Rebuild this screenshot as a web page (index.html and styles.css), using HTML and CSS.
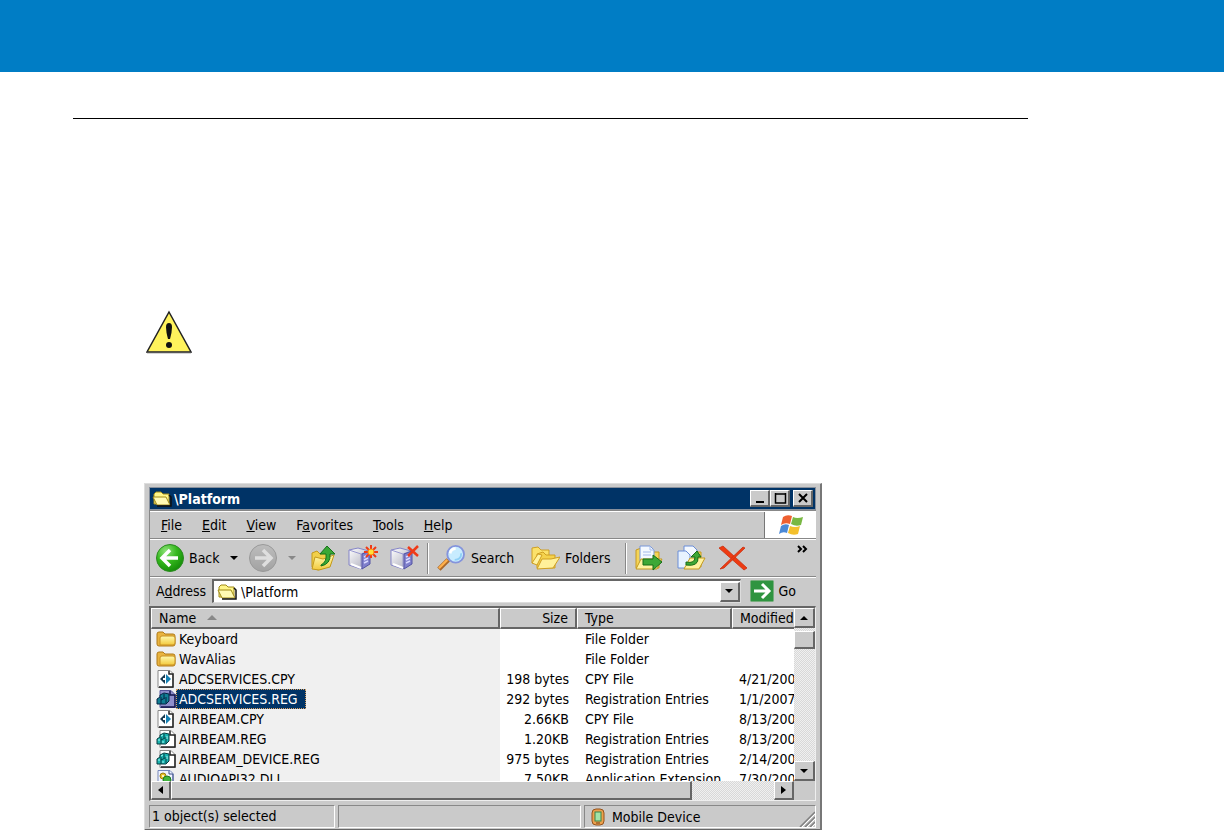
FILE: index.html
```html
<!DOCTYPE html>
<html lang="en">
<head>
<meta charset="utf-8">
<title>\Platform</title>
<link rel="stylesheet" href="styles.css">
</head>
<body>
<svg class="defs" aria-hidden="true">
  <defs>
    <linearGradient id="gold" x1="0" y1="0" x2="0" y2="1"><stop offset="0" stop-color="#fffbb0"/><stop offset="1" stop-color="#f3c93c"/></linearGradient>
    <radialGradient id="green" cx="35%" cy="25%" r="80%"><stop offset="0" stop-color="#8fe37a"/><stop offset=".5" stop-color="#35b81d"/><stop offset="1" stop-color="#138a08"/></radialGradient>
    <linearGradient id="gray" x1="0" y1="0" x2="0" y2="1"><stop offset="0" stop-color="#bdbdbd"/><stop offset="1" stop-color="#a2a2a2"/></linearGradient>
    <linearGradient id="pcface" x1="0" y1="0" x2="1" y2="1"><stop offset="0" stop-color="#ffffff"/><stop offset="1" stop-color="#a6a6b6"/></linearGradient>
    <symbol id="open-folder" viewBox="0 0 20 16">
      <path d="M2 13V3l2-2h5l2 2h6v10z" fill="#fff68a" stroke="#a08a18"/>
      <path d="M5 14L1 6h13l4 8z" fill="#fffab4" stroke="#a08a18"/>
      <path d="M17 4l2 2v9H5" fill="none" stroke="#111" stroke-width="1.5"/>
    </symbol>
    <symbol id="folder" viewBox="0 0 20 16">
      <path d="M1 13V3q0-2 2-2h4l2 2h8q2 0 2 2v8q0 2-2 2H3q-2 0-2-2z" fill="#e9b440" stroke="#b07a18"/>
      <path d="M4 14V7q0-2 2-2h11q2 0 2 2v5q0 2-2 2z" fill="url(#gold)" stroke="#c89024"/>
    </symbol>
    <symbol id="cpy" viewBox="0 0 20 18">
      <path d="M2 .5h12l3 3v14H2z" fill="#fff" stroke="#888"/>
      <path d="M13 1v3h4v13H3" fill="none" stroke="#222" stroke-width="1.5"/>
      <path d="M9 4v10L4 9z" fill="#173a50"/><path d="M10 4v10l5-5z" fill="#1682b4"/><path d="M7 8h2v2H7z" fill="#fff"/>
    </symbol>
    <symbol id="reg" viewBox="0 0 20 18">
      <path d="M4 .5h11l4 4v13H4z" fill="#fff" stroke="#888"/>
      <path d="M14 1v4h5v12H5" fill="none" stroke="#222" stroke-width="1.500"/>
      <path d="M1 9l3-2V5l4-2 5 1v7l-3 3H1z" fill="#18b4b0" stroke="#063c40"/>
      <path d="M5 7v7M5 10l4-2M8 4v4M10 7v6" fill="none" stroke="#063c40"/><path d="M5 6l2-1M2 10h2M7 11v2M11 6v3" stroke="#9ffaf4"/>
    </symbol>
    <symbol id="reg-selected" viewBox="0 0 20 18">
      <path d="M4 .5h11l4 4v13H4z" fill="#8f8fcc" stroke="#55559a"/>
      <path d="M14 1v4h5v12H5" fill="none" stroke="#15154c" stroke-width="1.500"/>
      <path d="M1 9l3-2V5l4-2 5 1v7l-3 3H1z" fill="#117f94" stroke="#052444"/>
      <path d="M5 7v7M5 10l4-2M8 4v4M10 7v6" fill="none" stroke="#052444"/>
    </symbol>
    <symbol id="dll" viewBox="0 0 20 18">
      <path d="M2 .5h12l3 3v14H2z" fill="#eef3ff" stroke="#7788bb"/><path d="M13 1v3h4v13" fill="none" stroke="#3d4c88"/>
      <circle cx="7" cy="6" r="3" fill="#e6c22a" stroke="#9c7c10"/><circle cx="11" cy="10" r="4" fill="#41b53c" stroke="#1d7a20"/><circle cx="7" cy="6" r="1" fill="#fff"/>
    </symbol>
    <symbol id="computer" viewBox="0 0 30 26">
      <path d="M1 5l9-2 11 3v13l-8 5-12-4z" fill="url(#pcface)" stroke="#8585c8"/>
      <path d="M1 5l12 4 8-3M13 9v15" fill="none" stroke="#9898d0"/>
      <path d="M14 9l8-3v13l-8 5z" fill="#8080cc" stroke="#5454a4"/>
      <path d="M16 12l4-2M16 15l4-2M16 18l4-2" stroke="#d8d8ff" stroke-width="1.500"/>
      <path d="M3 19l10 4" stroke="#fff" stroke-width="2"/>
    </symbol>
  </defs>
</svg>

<header class="banner"></header>
<main class="page">
  <hr class="rule">
  <svg class="caution" viewBox="0 0 46 44" role="img" aria-label="Caution">
    <path d="M23 2L45 42H1z" fill="#fff35c" stroke="#222" stroke-width="1.500"/>
    <path d="M1 42.500h44" stroke="#555" stroke-width="1.500"/>
    <path d="M20 17q0-4 3-4t3 4q0 5-2 12h-2q-2-7-2-12z" fill="#111"/><circle cx="23" cy="35" r="3" fill="#111"/>
  </svg>

  <section class="window">
    <div class="titlebar">
      <svg class="icon20"><use href="#open-folder"/></svg>
      <h1 class="title">\Platform</h1>
      <button class="bevel caption" aria-label="Minimize"><svg viewBox="0 0 16 12"><path d="M4 10h8" stroke="#000" stroke-width="2"/></svg></button>
      <button class="bevel caption" aria-label="Maximize"><svg viewBox="0 0 16 12"><path d="M3 2h11M3.500 1v10h10V1" fill="none" stroke="#000" stroke-width="1.500"/></svg></button>
      <button class="bevel caption close" aria-label="Close"><svg viewBox="0 0 16 12"><path d="M4 2l8 8M12 2l-8 8" stroke="#000" stroke-width="2"/></svg></button>
    </div>

    <div class="bars">
      <nav class="menubar">
        <button><u>F</u>ile</button><button><u>E</u>dit</button><button><u>V</u>iew</button><button>F<u>a</u>vorites</button><button><u>T</u>ools</button><button><u>H</u>elp</button>
        <div class="brand">
          <svg viewBox="0 0 26 22">
            <path d="M5 3q4-3 9-1l-2 8q-5-2-9 1z" fill="#ee6030"/><path d="M15 3q4 2 10 0l-2 8q-5 2-10-1z" fill="#79b843"/>
            <path d="M3 12q4-3 8-1l-2 8q-4-2-8 1z" fill="#4a88d6"/><path d="M12 12q5 2 10 0l-2 8q-5 2-10-1z" fill="#f4c02c"/>
          </svg>
        </div>
      </nav>

      <div class="toolbar">
        <button class="tool back">
          <svg class="round" viewBox="0 0 30 28"><circle cx="15" cy="14" r="13.500" fill="url(#green)" stroke="#2c8c20"/><path d="M15 6l-8 8 8 8M8 14h15" fill="none" stroke="#fff" stroke-width="3.500"/></svg>
          <span>Back</span>
        </button>
        <button class="tool drop" aria-label="Back history"><svg viewBox="0 0 8 4"><path d="M0 0h8L4 4z" fill="#000"/></svg></button>
        <button class="tool" aria-label="Forward"><svg class="round" viewBox="0 0 30 28"><circle cx="15" cy="14" r="13.500" fill="url(#gray)" stroke="#999"/><path d="M15 6l8 8-8 8M22 14H7" fill="none" stroke="#dedede" stroke-width="3.500"/></svg></button>
        <button class="tool drop" aria-label="Forward history"><svg viewBox="0 0 8 4"><path d="M0 0h8L4 4z" fill="#888"/></svg></button>
        <button class="tool up" aria-label="Up">
          <svg class="wide" viewBox="0 0 30 26"><path d="M4 22V8l5-2 3 3 10-1v13l-12 4z" fill="#f1d04a" stroke="#c39a1c"/><path d="M4 24l3-12 8 2 11-4-4 12-11 3z" fill="url(#gold)" stroke="#c39a1c"/><path d="M13 20q6-3 5-11h-6l7-8 8 8h-5q1 10-9 12z" fill="#3aa836" stroke="#15731a"/></svg>
        </button>
        <button class="tool pc" aria-label="Connect">
          <svg class="wide" viewBox="0 0 30 26"><use href="#computer"/><path d="M23 0v13M16 7h14M18 2l10 10M28 2L18 12" stroke="#f03a18" stroke-width="2"/><circle cx="23" cy="7" r="3" fill="#ffe23a" stroke="#ff8a10"/></svg>
        </button>
        <button class="tool pc" aria-label="Disconnect">
          <svg class="wide" viewBox="0 0 30 26"><use href="#computer"/><path d="M18 2l10 9M28 1L18 11" stroke="#f03a18" stroke-width="2.500"/></svg>
        </button>
        <span class="sep"></span>
        <button class="tool search">
          <svg class="wide" viewBox="0 0 30 28"><path d="M2 26L12 16" stroke="#a9672a" stroke-width="5"/><path d="M2 25L11 16" stroke="#ffb04c" stroke-width="2.500"/><circle cx="20" cy="10" r="9" fill="#c8ecff" stroke="#8494dc" stroke-width="2"/><path d="M14 9q1-5 6-5" fill="none" stroke="#fff" stroke-width="3"/><path d="M19 16q7 0 7-7" fill="none" stroke="#8fd0f6" stroke-width="2"/></svg>
          <span>Search</span>
        </button>
        <button class="tool folders">
          <svg class="wide" viewBox="0 0 30 26"><path d="M2 18V3l6-1 3 3h8v12z" fill="#fbe16a" stroke="#cf9f22"/><path d="M7 23V9l6-2 3 3h9v13z" fill="#f5d24c" stroke="#cf9f22"/><path d="M2 18L8 9l4 1-5 10z" fill="#fff3a0" stroke="#cf9f22"/><path d="M7 24l5-10h9l9-2-7 11z" fill="#fff19a" stroke="#cf9f22"/></svg>
          <span>Folders</span>
        </button>
        <span class="sep"></span>
        <button class="tool copy" aria-label="Copy to">
          <svg class="wide" viewBox="0 0 30 26"><path d="M2 23V5l5-2 4 4h14v16z" fill="#f4d457" stroke="#c59a20"/><path d="M6 1h10l4 4v13H6z" fill="#f4f9ff" stroke="#7997d8"/><path d="M16 1v4h4M9 7h8M9 10h8" fill="none" stroke="#a4baea"/><path d="M2 24l5-10h21l-5 10z" fill="#fff2a0" stroke="#c59a20"/><path d="M9 14h10v-4l9 7-9 8v-5H9z" fill="#3ea836" stroke="#176d17"/></svg>
        </button>
        <button class="tool move" aria-label="Move to">
          <svg class="wide" viewBox="0 0 30 26"><path d="M10 22V7h15v15z" fill="#f4d457" stroke="#c59a20"/><path d="M8 1h9l4 4v10H8z" fill="#f4f9ff" stroke="#6b8ed8"/><path d="M2 6h8l4 4v13H2z" fill="#e8f3ff" stroke="#6b8ed8"/><path d="M8 24l6-11h15l-6 11z" fill="#fff2a0" stroke="#c59a20"/><path d="M10 17q9 2 9-5h-4l6-6 4 6h-3q1 10-12 8z" fill="#3ea836" stroke="#176d17"/></svg>
        </button>
        <button class="tool delete" aria-label="Delete">
          <svg class="wide" viewBox="0 0 30 26"><path d="M1 3l4-2 24 22-3 2z" fill="#ee3b12" stroke="#c8300f" stroke-width=".8"/><path d="M25 2l2 1L6 23l-4 1z" fill="#ee3b12" stroke="#c8300f" stroke-width=".8"/></svg>
        </button>
        <button class="more" aria-label="More buttons"><svg viewBox="0 0 12 8"><path d="M1 1l3 3-3 3M6 1l3 3-3 3" fill="none" stroke="#000" stroke-width="2"/></svg></button>
      </div>

      <div class="address">
        <label for="path">A<u>d</u>dress</label>
        <div class="combo">
          <svg class="icon20"><use href="#open-folder"/></svg>
          <input id="path" type="text" value="\Platform">
          <button class="bevel arrow" aria-label="Show addresses"><svg viewBox="0 0 8 4"><path d="M0 0h8L4 4z"/></svg></button>
        </div>
        <button class="go">
          <svg viewBox="0 0 24 22"><rect x=".5" y=".5" width="23" height="21" rx="1" fill="#2f9440" stroke="#77ad7c"/><path d="M4 11h14M12 4l7 7-7 7" fill="none" stroke="#fff" stroke-width="3"/></svg>
          <span>Go</span>
        </button>
      </div>
    </div>

    <div class="list">
      <div class="view">
        <table>
          <colgroup><col><col class="c-size"><col class="c-type"><col class="c-mod"></colgroup>
          <thead><tr><th>Name <svg class="sort" viewBox="0 0 10 5"><path d="M5 0l5 5H0z" fill="#888"/></svg></th><th class="num">Size</th><th>Type</th><th>Modified</th></tr></thead>
          <tbody>
            <tr><td><div class="file"><svg><use href="#folder"/></svg><span>Keyboard</span></div></td><td></td><td>File Folder</td><td></td></tr>
            <tr><td><div class="file"><svg><use href="#folder"/></svg><span>WavAlias</span></div></td><td></td><td>File Folder</td><td></td></tr>
            <tr><td><div class="file"><svg><use href="#cpy"/></svg><span>ADCSERVICES.CPY</span></div></td><td class="num">198 bytes</td><td>CPY File</td><td>4/21/200</td></tr>
            <tr><td><div class="file selected"><svg><use href="#reg-selected"/></svg><span>ADCSERVICES.REG</span></div></td><td class="num">292 bytes</td><td>Registration Entries</td><td>1/1/2007</td></tr>
            <tr><td><div class="file"><svg><use href="#cpy"/></svg><span>AIRBEAM.CPY</span></div></td><td class="num">2.66KB</td><td>CPY File</td><td>8/13/200</td></tr>
            <tr><td><div class="file"><svg><use href="#reg"/></svg><span>AIRBEAM.REG</span></div></td><td class="num">1.20KB</td><td>Registration Entries</td><td>8/13/200</td></tr>
            <tr><td><div class="file"><svg><use href="#reg"/></svg><span>AIRBEAM_DEVICE.REG</span></div></td><td class="num">975 bytes</td><td>Registration Entries</td><td>2/14/200</td></tr>
            <tr><td><div class="file"><svg><use href="#dll"/></svg><span>AUDIOAPI32.DLL</span></div></td><td class="num">7.50KB</td><td>Application Extension</td><td>7/30/200</td></tr>
          </tbody>
        </table>
      </div>
      <div class="vscroll">
        <button class="bevel arrow" aria-label="Scroll up"><svg viewBox="0 0 8 4"><path d="M4 0l4 4H0z"/></svg></button>
        <div class="bevel vthumb"></div>
        <button class="bevel arrow end" aria-label="Scroll down"><svg viewBox="0 0 8 4"><path d="M0 0h8L4 4z"/></svg></button>
      </div>
      <div class="hscroll">
        <button class="bevel arrow" aria-label="Scroll left"><svg class="side" viewBox="0 0 5 8"><path d="M5 0v8L0 4z"/></svg></button>
        <div class="bevel hthumb"></div>
        <button class="bevel arrow end" aria-label="Scroll right"><svg class="side" viewBox="0 0 5 8"><path d="M0 0v8l5-4z"/></svg></button>
      </div>
      <div class="corner"></div>
    </div>

    <footer class="status">
      <div class="panel">1 object(s) selected</div>
      <div class="panel"></div>
      <div class="panel device">
        <svg class="pda" viewBox="0 0 14 18"><rect x="1" y="1" width="12" height="16" rx="4" fill="#eda04c" stroke="#94521c"/><rect x="4" y="4" width="6" height="9" fill="#a2e4a8" stroke="#39844a"/><path d="M5 15h4" stroke="#704018"/></svg>
        <span>Mobile Device</span>
        <svg class="grip" viewBox="0 0 16 16"><path d="M1 16L16 1M6 16L16 6M11 16l5-5" stroke="#808080" stroke-width="1.500"/><path d="M3 16L16 3M8 16l8-8M13 16l3-3" stroke="#fff"/></svg>
      </div>
    </footer>
  </section>
</main>
</body>
</html>
```

FILE: styles.css
```css
* { box-sizing: border-box; }
body {
  margin: 0;
  background: #fff;
  color: #000;
  font: 14px/20px "DejaVu Sans Condensed", "DejaVu Sans", sans-serif;
}
button, input { font: inherit; color: inherit; }
button { padding: 0; border: 0; background: none; }
svg { display: block; flex: none; }
.defs { position: absolute; width: 0; height: 0; }

.banner { height: 72px; background: #007dc5; }
.page { padding: 46px 196px 0 73px; }
.rule { margin: 0; border: 0; height: 1px; background: #000; }
.caution { width: 46px; height: 44px; margin: 191px 0 129px 73px; }

.window {
  margin: 0 206px 0 71px;
  padding: 3px 4px 1px 4px;
  background: #cacaca;
  border: 1px solid #ddd;
  border-right: 2px solid #777;
  border-bottom: 2px solid #666;
}
.bevel {
  background: #cacaca;
  border: 1px solid #fff;
  border-right: 2px solid #666;
  border-bottom: 2px solid #666;
}

.titlebar {
  display: flex;
  align-items: center;
  height: 23px;
  padding: 0 2px;
  background: #003366;
  border: 1px solid #88909c;
  color: #fff;
}
.icon20 { width: 20px; height: 16px; }
.title { flex: 1; margin: 0 0 0 2px; font-size: 14px; line-height: 20px; }
.caption { width: 20px; height: 17px; display: flex; align-items: center; justify-content: center; }
.caption svg { width: 16px; height: 12px; }
.close { margin-left: 3px; }

.bars { border: 1px solid #888; border-width: 1px 0 0 1px; }
.menubar {
  display: flex;
  align-items: stretch;
  height: 28px;
  padding-left: 1px;
  border-top: 1px solid #fff;
  border-bottom: 1px solid #888;
}
.menubar button { padding: 0 10px; }
.brand {
  display: flex;
  align-items: center;
  justify-content: center;
  width: 52px;
  margin-left: auto;
  background: #fff;
  border-left: 1px solid #777;
}
.brand svg { width: 26px; height: 22px; }

.toolbar {
  display: flex;
  align-items: center;
  height: 38px;
  padding: 0 7px 0 5px;
  border-top: 1px solid #fff;
  border-bottom: 1px solid #888;
}
.tool { display: flex; align-items: center; gap: 5px; }
.round { width: 30px; height: 28px; }
.wide { width: 30px; height: 26px; }
.back { width: 75px; gap: 4px; }
.drop { width: 18px; }
.drop svg { width: 8px; height: 4px; }
.tool:not(.back) + .drop { width: 19px; padding-left: 10px; }
.up { margin-left: 11px; }
.pc { margin-left: 10px; }
.pc + .pc { margin-left: 12px; }
.sep { width: 2px; height: 31px; background: #888; border-right: 1px solid #fff; margin: 0 7px; }
.search { width: 94px; }
.folders { width: 88px; }
.move, .delete { margin-left: 12px; }
.more { margin: 0 0 18px auto; }
.more svg { width: 12px; height: 8px; }

.address {
  display: flex;
  align-items: center;
  height: 27px;
  padding: 0 20px 0 6px;
  border-top: 1px solid #fff;
}
.address label { width: 56px; }
.combo {
  flex: 1;
  display: flex;
  align-items: center;
  height: 24px;
  padding-left: 3px;
  background: #fff;
  border: 2px solid #666;
  border-right: 1px solid #ddd;
  border-bottom: 1px solid #ddd;
}
.combo input { flex: 1; min-width: 0; height: 20px; margin-left: 4px; padding: 0; border: 0; background: none; }
.arrow { flex: none; display: flex; align-items: center; justify-content: center; width: 20px; height: 20px; }
.arrow svg { width: 8px; height: 4px; }
.arrow .side { width: 5px; height: 8px; }
.go { display: flex; align-items: center; gap: 5px; margin-left: 9px; }
.go svg { width: 24px; height: 22px; }

.list {
  display: grid;
  grid-template-columns: minmax(0, 1fr) 21px;
  grid-template-rows: 173px 19px;
  margin-top: 2px;
  border: 2px solid #666;
  border-right: 1px solid #eee;
  border-bottom: 1px solid #eee;
}
.view { overflow: hidden; background: linear-gradient(90deg, #f0f0f0 calc(100% - 294px), #fff 0); }
table { width: 100%; table-layout: fixed; border-collapse: separate; border-spacing: 0; }
.c-size { width: 77px; }
.c-type { width: 155px; }
.c-mod { width: 62px; }
th {
  height: 21px;
  padding: 0 7px;
  text-align: left;
  font-weight: normal;
  line-height: 18px;
  white-space: nowrap;
  background: #cacaca;
  border: 1px solid #fff;
  border-right: 2px solid #666;
  border-bottom: 2px solid #666;
}
th:last-child { border-right: 0; padding-right: 0; }
td { height: 20px; padding: 0 0 0 8px; line-height: 20px; white-space: nowrap; }
td:first-child { padding-left: 5px; }
td:last-child { padding-left: 7px; }
td.num { padding-right: 8px; padding-left: 0; }
.num { text-align: right; }
.sort { display: inline-block; width: 10px; height: 5px; margin: 0 0 3px 7px; }
.file { display: flex; align-items: center; height: 20px; }
.file svg { width: 20px; height: 18px; }
.file span { padding: 0 3px; line-height: 18px; }
.selected span { padding: 0 7px 0 2px; color: #fff; background: #003366; border: 1px dotted #d8a060; }

.vscroll, .hscroll { display: flex; background: repeating-conic-gradient(#d8d8d8 0 25%, #f0f0f0 0 50%) 0 0 / 2px 2px; }
.vscroll { flex-direction: column; }
.vthumb { width: 21px; height: 18px; margin-top: 3px; }
.vscroll .end { margin-top: auto; }
.vscroll .arrow { width: 21px; }
.hscroll .arrow { height: 19px; }
.hthumb { width: 81%; }
.hscroll .end { margin-left: auto; }
.corner { background: #cacaca; }

.status { display: grid; grid-template-columns: 186fr 243fr 232fr; gap: 3px; margin-top: 4px; }
.panel { height: 23px; padding: 0 2px; border: 1px solid #888; border-right-color: #fff; border-bottom-color: #fff; }
.device { display: flex; align-items: center; padding: 0 0 0 6px; }
.pda { width: 14px; height: 18px; margin-right: 7px; }
.grip { width: 16px; height: 16px; margin: 4px 0 0 auto; }
```
